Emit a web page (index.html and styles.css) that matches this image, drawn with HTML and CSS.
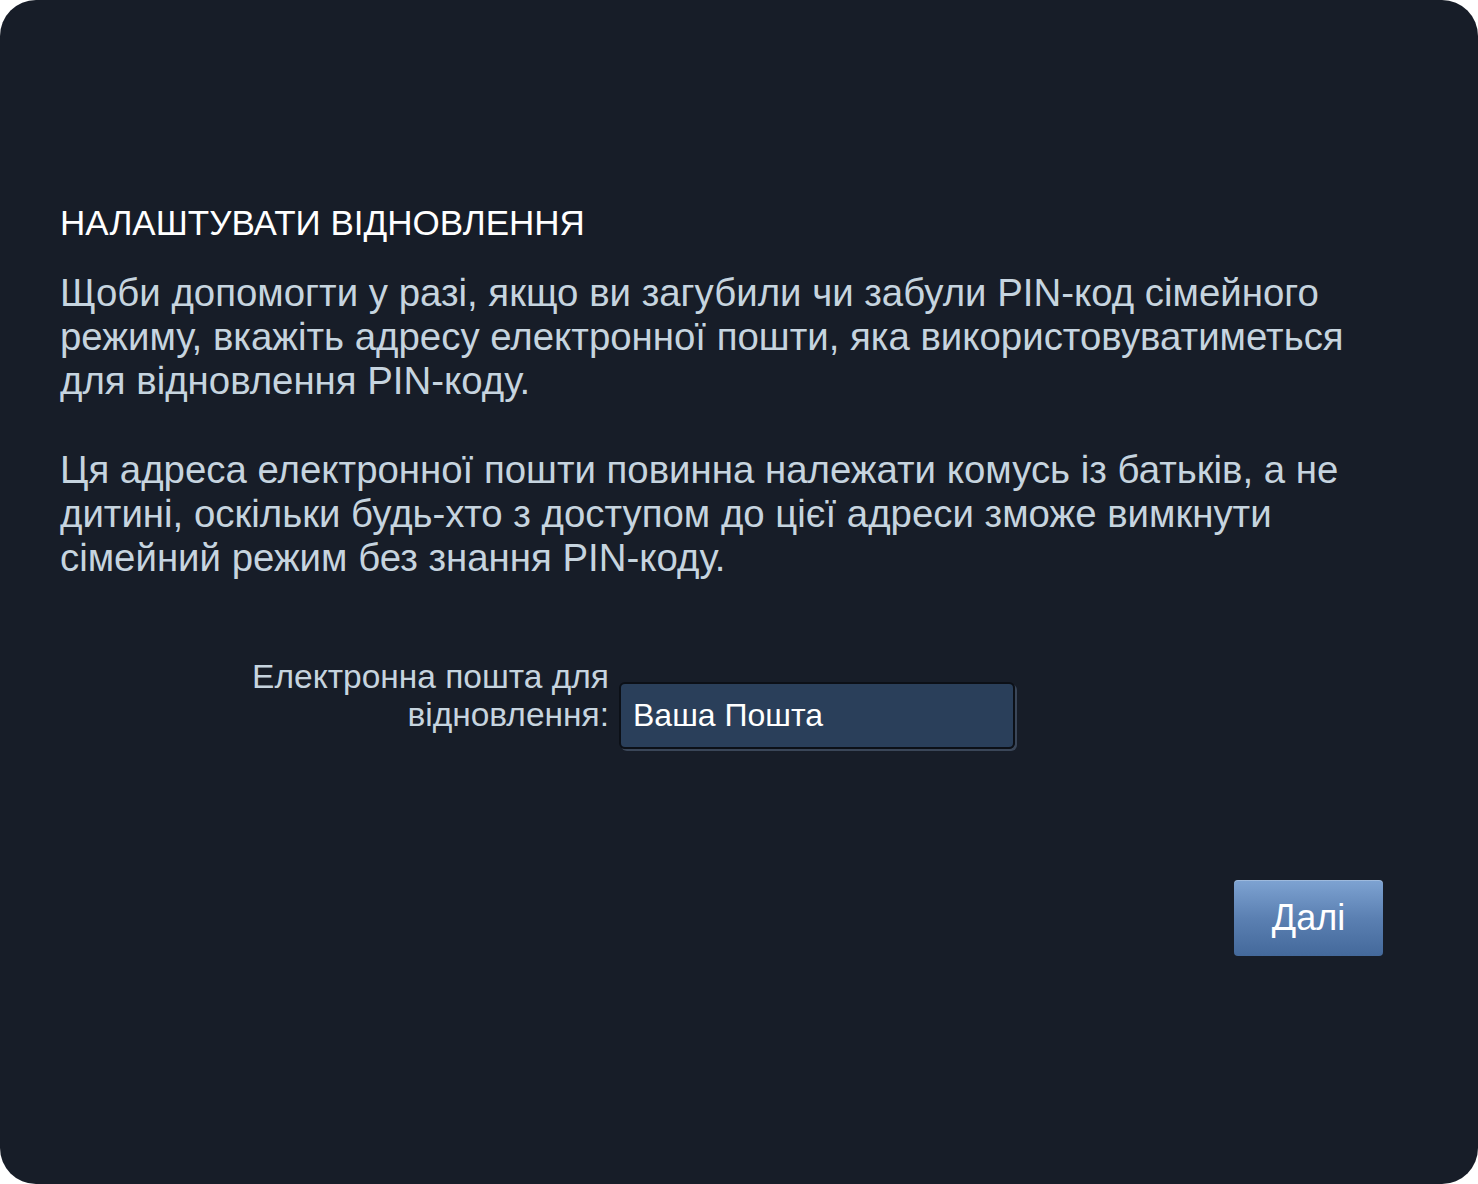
FILE: index.html
```html
<!DOCTYPE html>
<html lang="uk">
<head>
<meta charset="utf-8">
<title>Налаштувати відновлення</title>
<link rel="stylesheet" href="styles.css">
</head>
<body>
<div class="panel">
  <h1 class="title">НАЛАШТУВАТИ ВІДНОВЛЕННЯ</h1>
  <p class="text">Щоби допомогти у разі, якщо ви загубили чи забули PIN-код сімейного режиму, вкажіть адресу електронної пошти, яка використовуватиметься для відновлення PIN-коду.</p>
  <p class="text">Ця адреса електронної пошти повинна належати комусь із батьків, а не дитині, оскільки будь-хто з доступом до цієї адреси зможе вимкнути сімейний режим без знання PIN-коду.</p>
  <div class="field">
    <label class="label" for="email">Електронна пошта для відновлення:</label>
    <div class="input-wrap"><input id="email" class="input" type="text" value="Ваша Пошта"></div>
  </div>
  <div class="actions">
    <button class="btn" type="button">Далі</button>
  </div>
</div>
</body>
</html>
```

FILE: styles.css
```css
html, body {
  margin: 0;
  padding: 0;
  background: #ffffff;
}
.panel {
  box-sizing: border-box;
  height: 1184px;
  background: #171d28;
  border-radius: 36px;
  padding: 203px 60px 0 60px;
  font-family: "Liberation Sans", Arial, sans-serif;
}
.title {
  margin: 0 0 28px 0;
  font-size: 35px;
  font-weight: normal;
  line-height: 40px;
  color: #ffffff;
}
.text {
  margin: 0 0 45px 0;
  font-size: 38.4px;
  line-height: 44px;
  color: #c6d4df;
  max-width: 1320px;
}
.field {
  display: flex;
  align-items: flex-end;
  margin-top: 78px;
  padding-left: 180px;
}
.label {
  width: 369px;
  text-align: right;
  font-size: 33.5px;
  line-height: 38px;
  color: #c6d4df;
  padding-bottom: 15px;
}
.input-wrap {
  margin-left: 10px;
  border-radius: 6px;
  box-shadow: 2px 2px 0 #3a4658;
}
.input {
  box-sizing: border-box;
  width: 396px;
  height: 67px;
  background: #2a3f5a;
  border: 2px solid #0c1017;
  border-radius: 6px;
  padding: 0 12px;
  font-family: "Liberation Sans", Arial, sans-serif;
  font-size: 32px;
  color: #ffffff;
  outline: none;
  display: block;
}
.actions {
  display: flex;
  justify-content: flex-end;
  margin-top: 131px;
  padding-right: 35px;
}
.btn {
  width: 149px;
  height: 76px;
  border: none;
  border-radius: 4px;
  background: linear-gradient(to bottom, #7ea3d2 0%, #5b80b2 50%, #44699b 100%);
  box-shadow: inset 0 1px 0 rgba(255,255,255,0.25);
  color: #ffffff;
  font-family: "Liberation Sans", Arial, sans-serif;
  font-size: 36px;
  padding: 0;
  cursor: pointer;
}
```
